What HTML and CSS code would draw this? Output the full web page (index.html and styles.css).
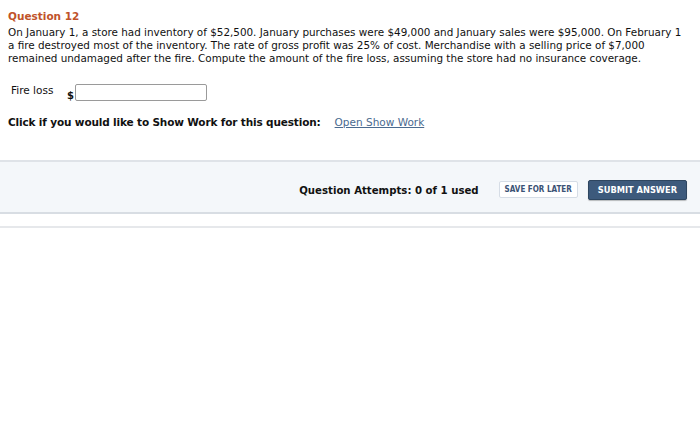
FILE: index.html
```html
<!DOCTYPE html>
<html>
<head>
<meta charset="utf-8">
<link rel="stylesheet" href="styles.css">
</head>
<body>
<div class="question">
  <div class="q-title">Question 12</div>
  <p class="q-text">On January 1, a store had inventory of $52,500. January purchases were $49,000 and January sales were $95,000. On February 1<br>a fire destroyed most of the inventory. The rate of gross profit was 25% of cost. Merchandise with a selling price of $7,000<br>remained undamaged after the fire. Compute the amount of the fire loss, assuming the store had no insurance coverage.</p>
  <div class="answer-row">
    <span class="label">Fire loss</span>
    <span class="dollar">$</span>
    <span class="input"></span>
  </div>
  <div class="show-work">
    <span class="sw-label">Click if you would like to Show Work for this question:</span>
    <a class="sw-link">Open Show Work</a>
  </div>
</div>
<div class="band">
  <span class="attempts">Question Attempts: 0 of 1 used</span>
  <span class="btn-save">SAVE FOR LATER</span>
  <span class="btn-submit">SUBMIT ANSWER</span>
</div>
<div class="rule"></div>
</body>
</html>
```
FILE: styles.css
```css
html, body {
  margin: 0;
  padding: 0;
  background: #fff;
}
body {
  font-family: "DejaVu Sans", Verdana, sans-serif;
  color: #111;
  width: 700px;
}
.question {
  padding: 9px 8px 0 8px;
}
.q-title {
  color: #c0532a;
  font-weight: bold;
  font-size: 10.5px;
  line-height: 14px;
  margin-bottom: 3px;
}
.q-text {
  margin: 0;
  font-size: 10.4px;
  line-height: 13px;
  white-space: nowrap;
}
.answer-row {
  display: flex;
  align-items: flex-end;
  margin-top: 18px;
  padding-left: 3px;
  height: 18px;
}
.label {
  font-size: 10.5px;
  align-self: flex-start;
  margin-top: 1px;
  width: 56px;
}
.dollar {
  font-size: 10px;
  font-weight: bold;
  margin-right: 1px;
}
.input {
  display: block;
  width: 130px;
  height: 15px;
  border: 1px solid #9a9a9a;
  border-radius: 2px;
  background: #fff;
}
.show-work {
  display: flex;
  margin-top: 15px;
  font-size: 10.5px;
  line-height: 13px;
}
.sw-label {
  font-weight: bold;
  letter-spacing: -0.15px;
}
.sw-link {
  margin-left: 14px;
  color: #4a6a8f;
  text-decoration: underline;
}
.band {
  margin-top: 31px;
  border-top: 2px solid #dfe3e8;
  border-bottom: 2px solid #d8dde3;
  background: #f4f7fa;
  height: 45px;
  padding-top: 5px;
  display: flex;
  align-items: center;
  justify-content: flex-end;
  padding-right: 13px;
}
.attempts {
  font-family: "DejaVu Sans Condensed", "DejaVu Sans", sans-serif;
  font-weight: bold;
  font-size: 11.3px;
  margin-right: 20px;
  padding-top: 1px;
}
.btn-save {
  font-family: "DejaVu Sans Condensed", "DejaVu Sans", sans-serif;
  font-weight: bold;
  font-size: 8px;
  color: #3b5275;
  background: #fff;
  border: 1px solid #d6dde6;
  border-radius: 2px;
  padding: 3px 5px;
  margin-right: 10px;
  line-height: 9px;
}
.btn-submit {
  font-family: "DejaVu Sans Condensed", "DejaVu Sans", sans-serif;
  font-weight: bold;
  font-size: 9.2px;
  color: #fff;
  background: #3d5a7c;
  border: 1px solid #2e4660;
  border-radius: 2px;
  padding: 4px 9px;
  line-height: 10px;
  box-shadow: 0 1px 1px rgba(0,0,0,0.25);
}
.rule {
  margin-top: 12px;
  border-top: 2px solid #e6e8eb;
}
```
